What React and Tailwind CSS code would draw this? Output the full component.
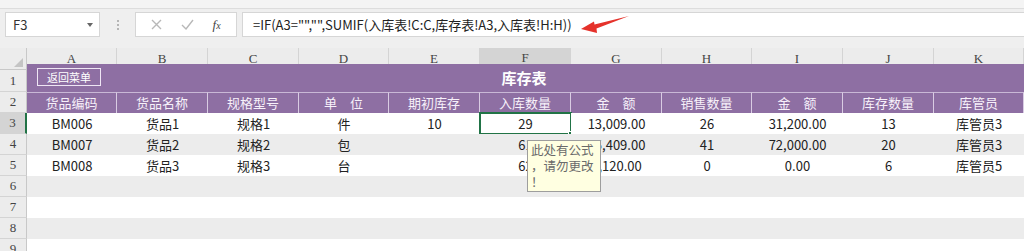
import React from "react";

const cols = ["A", "B", "C", "D", "E", "F", "G", "H", "I", "J", "K"];
const heads = ["货品编码", "货品名称", "规格型号", "单　位", "期初库存", "入库数量", "金　额", "销售数量", "金　额", "库存数量", "库管员"];
const rows = [
  ["BM006", "货品1", "规格1", "件", "10", "29", "13,009.00", "26", "31,200.00", "13", "库管员3"],
  ["BM007", "货品2", "规格2", "包", "", "61", "15,409.00", "41", "72,000.00", "20", "库管员3"],
  ["BM008", "货品3", "规格3", "台", "", "62", "6,120.00", "0", "0.00", "6", "库管员5"],
];
const grid = "grid grid-cols-[27px_90px_91px_91px_90px_91px_91px_91px_90px_91px_91px_90px]";
const cjk = { fontFamily: '"Noto Sans CJK SC", "Noto Sans", sans-serif' };
const serif = { fontFamily: '"Liberation Serif", "DejaVu Serif", serif' };

function RowHead({ n, active, tall }) {
  return (
    <div
      style={serif}
      className={`flex justify-center text-[13px] text-[#444] border-b border-[#d4d4d4] ${tall ? "items-end pb-[1px]" : "items-center"} ${
        active ? "bg-[#d4d4d4] border-r-2 border-r-[#217346]" : "bg-[#ececec] border-r border-r-[#c8c8c8]"
      }`}
    >
      {n}
    </div>
  );
}

export default function App() {
  return (
    <div className="w-[1024px] h-[251px] overflow-hidden bg-white relative" style={cjk}>
      {/* formula bar */}
      <div className="h-[48px] bg-[#efefef] flex flex-col">
        <div className="h-[9px] bg-[#f4f4f4] border-b border-[#dddddd]" />
        <div className="flex items-center mt-[3px] h-[25px]">
          <div className="ml-[5px] w-[95px] h-[25px] bg-white border border-[#d6d6d6] flex items-center justify-between pl-[7px] pr-[6px]">
            <span className="text-[13px] text-[#333]">F3</span>
            <span className="w-0 h-0 border-l-[3px] border-r-[3px] border-t-[4px] border-l-transparent border-r-transparent border-t-[#666]" />
          </div>
          <div className="w-[35px] flex flex-col items-center gap-[2px]">
            <span className="w-[2px] h-[2px] bg-[#b5b5b5]" />
            <span className="w-[2px] h-[2px] bg-[#b5b5b5]" />
            <span className="w-[2px] h-[2px] bg-[#b5b5b5]" />
          </div>
          <div className="w-[102px] h-[25px] bg-white border border-[#d6d6d6] flex items-center justify-around px-[6px]">
            <svg width="11" height="11" viewBox="0 0 11 11">
              <path d="M1 1 L10 10 M10 1 L1 10" stroke="#b8b8b8" strokeWidth="1.4" />
            </svg>
            <svg width="13" height="11" viewBox="0 0 13 11">
              <path d="M1 6 L5 10 L12 1" stroke="#b8b8b8" strokeWidth="1.4" fill="none" />
            </svg>
            <span className="text-[13px] italic text-[#444]" style={serif}>
              f<span className="text-[10px]">x</span>
            </span>
          </div>
          <div className="ml-[5px] flex-1 h-[25px] bg-white border border-[#d6d6d6] border-r-0 flex items-center pl-[10px]">
            <span className="text-[13px] text-[#222]">=IF(A3="","",SUMIF(入库表!C:C,库存表!A3,入库表!H:H))</span>
          </div>
        </div>
      </div>

      {/* column headers */}
      <div className={`${grid} h-[16px]`}>
        <div className="bg-[#ececec] border-r border-b border-[#c8c8c8] relative">
          <svg className="absolute right-[3px] bottom-[2px]" width="9" height="9" viewBox="0 0 9 9">
            <path d="M9 0 L9 9 L0 9 Z" fill="#c4c4c4" />
          </svg>
        </div>
        {cols.map((c) => (
          <div
            key={c}
            style={serif}
            className={`flex items-center justify-center text-[13px] text-[#444] border-r border-[#d4d4d4] ${
              c === "F" ? "bg-[#d4d4d4] border-b-2 border-b-[#217346]" : "bg-[#ececec] border-b border-b-[#c8c8c8]"
            }`}
          >
            {c}
          </div>
        ))}
      </div>

      {/* row 1 title */}
      <div className={`${grid} h-[28px]`}>
        <RowHead n="1" tall />
        <div className="col-span-11 bg-[#8e6fa3] relative flex items-center justify-center">
          <button className="absolute left-[10px] top-[4px] h-[18px] w-[64px] border border-[#efe6f4] text-[11px] text-white leading-none">
            返回菜单
          </button>
          <span className="text-white text-[15px] font-bold pr-[3px]">库存表</span>
        </div>
      </div>

      {/* row 2 headers */}
      <div className={`${grid} h-[21px]`}>
        <RowHead n="2" />
        {heads.map((h, i) => (
          <div
            key={i}
            className="bg-[#8e6fa3] border-t border-[#c9b8d6] border-r border-r-[#d9cce3] flex items-center justify-center text-[13px] text-[#f7f1fa]"
          >
            {h}
          </div>
        ))}
      </div>

      {/* data rows */}
      {rows.map((r, ri) => (
        <div key={ri} className={`${grid} h-[21px]`}>
          <RowHead n={String(ri + 3)} active={ri === 0} />
          {r.map((v, ci) => (
            <div
              key={ci}
              className={`relative flex items-center justify-center text-[13px] text-[#222] ${ri === 1 ? "bg-[#ececec]" : "bg-white"}`}
            >
              {v}
              {ri === 0 && ci === 5 && (
                <span className="absolute -left-[1px] -top-[1px] -right-[1px] -bottom-[1px] border-2 border-[#217346]">
                  <span className="absolute -right-[4px] -bottom-[4px] w-[6px] h-[6px] bg-[#217346] border border-white" />
                </span>
              )}
            </div>
          ))}
        </div>
      ))}

      {/* empty rows */}
      {[6, 7, 8, 9].map((n) => (
        <div key={n} className={`${grid} h-[21px]`}>
          <RowHead n={String(n)} />
          <div className={`col-span-11 ${n % 2 === 0 ? "bg-[#ececec]" : "bg-white"}`} />
        </div>
      ))}

      {/* comment tooltip */}
      <div className="absolute left-[527px] top-[140px] w-[74px] h-[52px] bg-[#ffffe1] border border-[#9d9d9d] px-[3px] pt-[1px] text-[12.5px] leading-[16px] text-[#6a6a6a] whitespace-nowrap overflow-hidden">
        <div>此处有公式</div>
        <div>，请勿更改</div>
        <div>！</div>
      </div>

      {/* red arrow */}
      <svg className="absolute left-[576px] top-[12px]" width="56" height="24" viewBox="0 0 56 24">
        <path d="M5 17 L18 9.5 L18.5 12.5 L53 4 L20.5 16.5 L21 21 Z" fill="#e5322b" />
      </svg>
    </div>
  );
}
